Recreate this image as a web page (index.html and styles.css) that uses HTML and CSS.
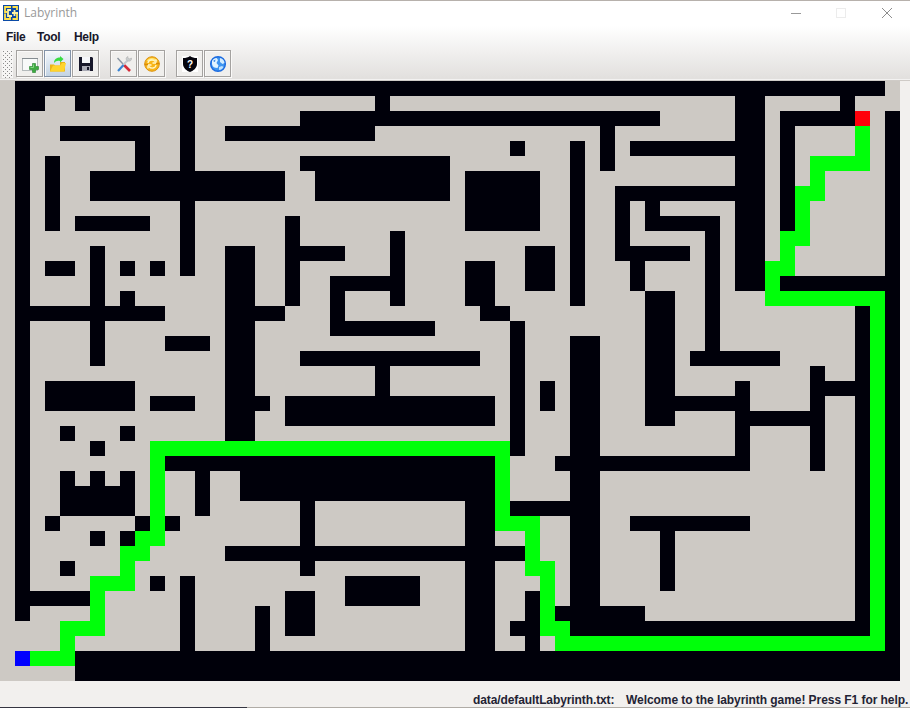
FILE: index.html
```html
<!DOCTYPE html>
<html lang="en">
<head>
<meta charset="utf-8">
<title>Labyrinth</title>
<link rel="stylesheet" href="styles.css">
</head>
<body>
<div class="window">
  <header class="titlebar">
    <svg class="app-icon" width="16" height="16" viewBox="0 0 16 16">
      <rect width="16" height="16" fill="#0b4aa6"/>
      <path d="M8 2H2v5h2M2 8.500V14h5v-2M14 8v6H9.500M9.500 2H14v3" fill="none" stroke="#ffe14a" stroke-width="1.800"/>
      <path d="M8 5H5v6h4M11.500 5v6M9 8h6" fill="none" stroke="#fff3a0" stroke-width="1.800"/>
    </svg>
    <span class="title">Labyrinth</span>
    <svg class="controls" width="120" height="26" viewBox="0 0 120 26">
      <path d="M1 12.500h10" stroke="#999"/>
      <rect x="46.500" y="7.500" width="9" height="9" fill="none" stroke="#ececec"/>
      <path d="M92 7l10 10M102 7l-10 10" stroke="#8d8d8d" stroke-width="1"/>
    </svg>
  </header>
  <div class="chrome">
    <nav class="menu"><span class="m-file">File</span><span class="m-tool">Tool</span><span class="m-help">Help</span></nav>
    <div class="toolbar">
      <svg class="grip" width="11" height="28" shape-rendering="crispEdges">
        <defs><pattern id="dots" width="4" height="4" patternUnits="userSpaceOnUse">
          <rect width="4" height="4" fill="#f6f5f4"/>
          <rect x="1" y="1" width="1" height="1" fill="#8b8b8b"/>
          <rect x="3" y="3" width="1" height="1" fill="#8b8b8b"/>
        </pattern></defs>
        <rect width="11" height="28" fill="url(#dots)"/>
      </svg>
      <span class="group">
        <button class="btn" aria-label="New"><svg width="18" height="18" viewBox="0 0 18 18">
          <rect x="1.500" y="3.500" width="15" height="12" fill="#f8faf9" stroke="#b4babb"/>
          <path d="M1 3.500h16" stroke="#858c90"/>
          <path d="M8.500 11.500h3v-3h3v3h3v3h-3v3h-3v-3h-3z" fill="#3cab40" stroke="#23822b" stroke-width=".6"/>
          <path d="M9.500 12.500h3v-3" stroke="#82d780" fill="none"/>
        </svg></button>
        <button class="btn active" aria-label="Open"><svg width="18" height="18" viewBox="0 0 18 18">
          <path d="M1 16.500V9.500h4l1 1h5V7h5v9.500z" fill="#eab31a"/>
          <path d="M1 16.500l3-6h7l2-2.500h4l-2 8.500z" fill="#ffd42d"/>
          <path d="M5 8c0-4 3-5.500 6-5.500V1l3.500 3L11 7.500V6C8 5.500 7 6 5 8z" fill="#38dc42"/>
        </svg></button>
        <button class="btn" aria-label="Save"><svg width="18" height="18" viewBox="0 0 18 18">
          <path d="M2 2h13l1 1v13H2z" fill="#17172a"/>
          <path d="M5 2h8v6H5z" fill="#f6f7fa"/>
          <path d="M5 11h8v5H5z" fill="#a9aab5"/>
          <path d="M10 12h2v3h-2z" fill="#17172a"/>
        </svg></button>
      </span>
      <span class="group">
        <button class="btn" aria-label="Settings"><svg width="18" height="18" viewBox="0 0 18 18">
          <path d="M2.500 3l5.500 6" stroke="#8b95a0" stroke-width="1.400"/>
          <path d="M9 10l6 6" stroke="#d52b38" stroke-width="2.600"/>
          <path d="M13 5L8 10" stroke="#c3c8cc" stroke-width="2"/>
          <path d="M8.500 10l-5.500 6" stroke="#3b84d2" stroke-width="2.200"/>
          <path d="M13 1.500c-3 1-2 4 0 4.500s4-.5 3.500-3L14 4l-1-1z" fill="#c8cccd" stroke="#aaa" stroke-width=".5"/>
        </svg></button>
        <button class="btn" aria-label="Solve"><svg width="18" height="18" viewBox="0 0 18 18">
          <circle cx="9" cy="9" r="7.300" fill="#f8b51a" stroke="#dc9410"/>
          <path d="M3.500 6a6.500 6.500 0 0 1 11 0z" fill="#ffe573"/>
          <path d="M5 8c.500-3.500 5-4 7-1.500M13 4.500V8H9.500M13 10c-.500 3.500-5 4-7 1.500M5 13.500V10h3.500" fill="none" stroke="#fff6c8" stroke-width="1.400"/>
          <path d="M1.500 9.500H5M13 8.500h3.500" stroke="#d98b07" stroke-width="1.600"/>
        </svg></button>
      </span>
      <span class="group">
        <button class="btn" aria-label="Help"><svg width="18" height="18" viewBox="0 0 18 18">
          <rect x="1" y="1" width="16" height="16" fill="#fff"/>
          <path d="M9 1c2 1.500 4 2 7 2v6c0 4-4 7-7 8-3-1-7-4-7-8V3c3 0 5-.5 7-2z" fill="#05050d"/>
          <text class="shield-mark" x="9" y="12.500" text-anchor="middle">?</text>
        </svg></button>
        <button class="btn" aria-label="Web"><svg width="18" height="18" viewBox="0 0 18 18">
          <circle cx="9" cy="9" r="7.300" fill="#3f95f0" stroke="#1c6be0" stroke-width="1.500"/>
          <path d="M3 6c1-2 3-3 4.500-3L9 5 7.500 8l2 2.500-1 2.500c-3 0-5-1-5.500-4z" fill="#e4f5ff"/>
          <path d="M11 3c3 .500 4.500 3 4.500 5l-2 1-2.500-2z" fill="#d2ecff"/>
          <path d="M10 12l3-1 1.500 1c-1 2-2.500 3-4.500 3z" fill="#bfe2ff"/>
          <path d="M4 6l2.500-1.500L6 7z" fill="#2c7fe4"/>
        </svg></button>
      </span>
    </div>
  </div>
  <main class="board">
    <svg class="maze" width="900" height="600" viewBox="0 0 60 40" shape-rendering="crispEdges">
      <path id="walls" class="wall"/>
      <path id="route" class="route"/>
      <rect class="start" x="1" y="38" width="1" height="1"/>
      <rect class="goal" x="57" y="2" width="1" height="1"/>
    </svg>
  </main>
  <footer class="status"><span class="path">data/defaultLabyrinth.txt:</span><span class="message">Welcome to the labyrinth game! Press F1 for help.</span></footer>
  <div class="bottom-edge"></div>
</div>
<script src="maze.js"></script>
</body>
</html>
```
FILE: styles.css
```css
* { box-sizing: border-box; }
body { margin: 0; width: 910px; height: 708px; overflow: hidden; font-family: "Liberation Sans", Arial, sans-serif; }
.window { display: flex; flex-direction: column; width: 910px; height: 708px; background: #f2f0ee; }
.titlebar { display: flex; height: 26px; border-top: 1px solid #b7b1ac; background: #fff; }
.app-icon { margin: 4px 0 0 3px; }
.title { width: 54px; margin-left: 5px; font: 12px/24px "Open Sans", "Noto Sans", sans-serif; color: #999; }
.controls { margin-left: auto; }
.chrome { height: 55px; background: linear-gradient(#fff, #e2e0de 52px, #e2e0de); border-bottom: 1px solid #cfcbc7; box-shadow: inset 0 -1px #f3f2f1; }
.menu { display: flex; height: 22px; padding-left: 6px; font: bold 12px/22px "Liberation Sans", Arial, sans-serif; letter-spacing: -.3px; color: #17172a; }
.m-file { width: 31px; }
.m-tool { width: 37px; }
.toolbar { display: flex; height: 31px; padding: 2px 0 0 2px; }
.grip { margin-right: 3px; }
.group { display: flex; gap: 1px; margin-right: 11px; }
.btn { display: flex; align-items: center; justify-content: center; width: 27px; height: 27px; padding: 0; border: 1px solid #a4a2a0; background: #f0efed; box-shadow: inset 1px 1px #faf9f8, 1px 1px #faf9f8; }
.btn.active { border-color: #8393a8; background: linear-gradient(#f4f8fc, #c3d3e4); }
.shield-mark { font: bold 10px "Liberation Sans", Arial, sans-serif; fill: #fff; }
.board { display: flex; height: 600px; }
.maze { display: block; background: #cdc9c4; }
.wall { fill: #00000a; }
.route { fill: #00ff0a; }
.start { fill: #0000ff; }
.goal { fill: #ff000a; }
.status { display: flex; justify-content: flex-end; height: 26px; padding: 9px 3px 0 0; font: bold 12px/20px "Liberation Sans", Arial, sans-serif; color: #232334; white-space: nowrap; }
.path { width: 142px; margin-right: 11px; letter-spacing: -.1px; }
.message { width: 281px; letter-spacing: -.06px; }
.bottom-edge { height: 1px; background: linear-gradient(90deg, #353541 247px, #b0aca6 247px); }
```
FILE: maze.js
```js
// Each entry is x, y, width, height in grid cells.
const walls = [
  [1,0,58,1],[1,1,1,35],[2,1,1,1],[5,1,1,1],[12,1,1,12],[25,1,1,1],[20,2,24,1],[15,3,10,1],
  [4,3,6,1],[9,4,1,2],[3,5,1,5],[6,6,13,2],[5,9,5,1],[20,5,10,1],[21,6,9,2],[34,4,1,1],
  [38,4,1,11],[40,3,1,3],[42,4,7,1],[49,1,2,13],[31,6,5,4],[52,2,5,1],[56,1,1,1],[52,3,1,7],
  [59,2,1,38],[41,7,8,1],[41,8,1,4],[42,11,4,1],[42,12,1,2],[43,8,1,2],[43,9,5,1],[47,10,1,8],
  [46,18,6,1],[19,9,1,6],[20,11,3,1],[26,10,1,5],[22,13,4,1],[22,14,1,3],[22,16,7,1],
  [15,11,2,13],[17,15,2,1],[17,21,1,1],[6,11,1,8],[3,12,2,1],[8,12,1,1],[10,12,1,1],[8,14,1,1],
  [2,15,9,1],[11,17,3,1],[31,12,2,3],[32,15,2,1],[35,11,2,3],[34,16,1,9],[20,18,12,1],
  [25,19,1,2],[19,21,14,2],[36,20,1,2],[38,17,2,19],[3,20,6,2],[10,21,3,1],[4,23,1,1],
  [8,23,1,1],[6,24,1,1],[43,14,2,9],[45,21,4,1],[49,20,1,6],[50,22,4,1],[54,19,1,7],[55,20,2,1],
  [57,15,1,22],[52,13,7,1],[37,25,12,1],[11,25,22,1],[16,26,17,2],[13,26,1,3],[20,28,1,5],
  [31,28,2,10],[15,31,20,1],[34,28,4,1],[42,29,8,1],[44,30,1,4],[4,26,1,1],[6,26,1,1],[8,26,1,1],
  [4,27,5,2],[3,29,1,1],[9,29,1,1],[11,29,1,1],[6,30,1,1],[8,30,1,1],[4,32,1,1],[10,33,1,1],
  [12,33,1,5],[2,34,4,1],[19,34,2,3],[17,35,1,3],[23,33,5,2],[35,34,1,4],[34,36,1,1],
  [37,35,6,1],[38,36,20,1],[5,38,55,2]
];
const route = [
  [57,3,1,3],[54,5,3,1],[54,6,1,2],[53,7,1,4],[52,10,1,3],[51,12,1,3],[52,14,7,1],[58,15,1,23],
  [37,37,21,1],[37,36,1,1],[36,32,1,5],[35,29,1,4],[33,29,2,1],[33,24,1,5],[10,24,23,1],
  [10,25,1,6],[9,30,1,2],[8,31,1,3],[6,33,2,1],[6,34,1,3],[4,36,2,1],[4,37,1,2],[2,38,3,1]
];
const outline = cells => cells.map(([x, y, w, h]) => `M${x} ${y}h${w}v${h}h${-w}z`).join("");
document.getElementById("walls").setAttribute("d", outline(walls));
document.getElementById("route").setAttribute("d", outline(route));
```
